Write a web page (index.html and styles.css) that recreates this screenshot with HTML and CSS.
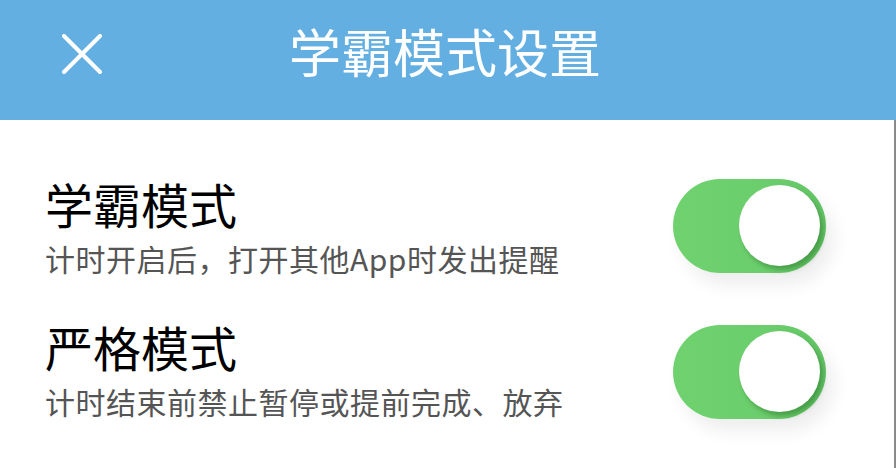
FILE: index.html
```html
<!DOCTYPE html>
<html lang="zh-CN">
<head>
  <meta charset="UTF-8">
  <title>学霸模式设置</title>
  <meta name="viewport" content="width=device-width,initial-scale=1,user-scalable=no">
  <link rel="stylesheet" href="styles.css">
</head>
<body>
<div class="page">
  <!-- 顶部导航栏 -->
  <div class="navbar">
    <span class="close">
      <svg width="40" height="40" viewBox="0 0 40 40"><path d="M2 2L38 38M38 2L2 38" stroke="#fff" stroke-width="4" stroke-linecap="round"/></svg>
    </span>
    <div class="nav-title">学霸模式设置</div>
  </div>

  <!-- 设置列表 -->
  <div class="list">
    <div class="row">
      <div class="text">
        <div class="name">学霸模式</div>
        <div class="desc">计时开启后，打开其他App时发出提醒</div>
      </div>
      <div class="switch on"><span class="knob"></span></div>
    </div>
    <div class="row">
      <div class="text">
        <div class="name">严格模式</div>
        <div class="desc">计时结束前禁止暂停或提前完成、放弃</div>
      </div>
      <div class="switch on"><span class="knob"></span></div>
    </div>
  </div>
</div>
</body>
</html>
```

FILE: styles.css
```css
body{margin:0;font-family:"Noto Sans CJK SC","Noto Sans",sans-serif;background:#fff;color:#000}
.page{width:896px;height:468px;overflow:hidden}
.navbar{height:120px;background:#64afe2;display:flex;align-items:center;justify-content:center;position:relative}
.close{position:absolute;left:62px;top:34px;width:40px;height:40px}
.close svg{display:block}
.nav-title{color:#fff;font-size:52px;font-weight:400;line-height:1;margin:-18px 0 0 -6px}
.list{height:348px;border-right:2px solid #8a8a8a;box-sizing:border-box;padding:45px 0 0 45px}
.row{display:flex;align-items:center;justify-content:space-between;padding-right:68px;height:146px;margin-top:-12px}
.row + .row{margin-top:0}
.row + .row .text{margin-top:-6px}
.name{font-size:48px;line-height:48px}
.desc{font-size:30px;line-height:30px;color:#555;margin-top:16px;letter-spacing:.5px}
.switch{width:153px;height:94px;border-radius:47px;background:linear-gradient(90deg,#6fd26f 0%,#6bce6c 60%,#63c465 100%);display:flex;align-items:center;justify-content:flex-end;padding-right:6px;box-sizing:border-box;box-shadow:8px 12px 18px rgba(0,0,0,.07)}
.knob{width:81px;height:81px;border-radius:50%;background:#fff;box-shadow:3px 4px 5px rgba(0,60,0,.3);margin-top:-1px}
```
